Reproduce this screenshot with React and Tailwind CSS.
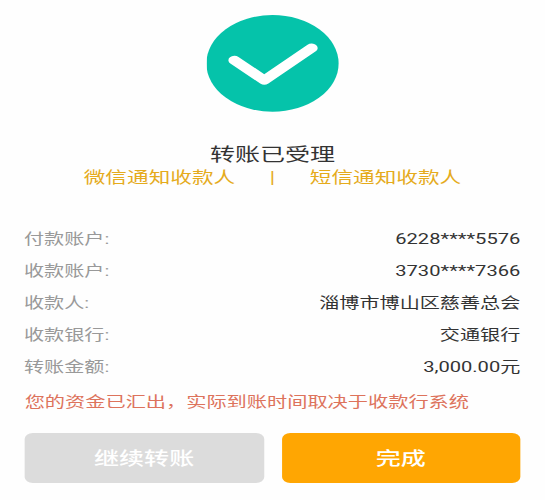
const details = [
  { label: "付款账户:", value: "6228****5576" },
  { label: "收款账户:", value: "3730****7366" },
  { label: "收款人:", value: "淄博市博山区慈善总会" },
  { label: "收款银行:", value: "交通银行" },
  { label: "转账金额:", value: "3,000.00元" },
];

const SuccessIcon = () => (
  <svg className="block w-[97px] h-[97px]" viewBox="0 0 97 97" fill="none">
    <circle cx="48" cy="48.4" r="48.3" fill="#05c3aa" />
    <path
      d="M20.2 45.2 L42 65.2 L76.6 33"
      stroke="#fff"
      strokeWidth="8.8"
      strokeLinecap="round"
      strokeLinejoin="round"
    />
  </svg>
);

const App = () => {
  return (
    <div className="w-[545px] h-[500px] overflow-hidden bg-[#fefefe]">
      {/* wide screen: the 398px layout is stretched to the full width */}
      <div className="w-[398px] h-[500px] origin-top-left scale-x-[1.3693] flex flex-col px-[18px] pt-[14.5px] font-[Roboto,'Noto_Sans_CJK_SC',sans-serif]">
        <div className="flex justify-center">
          <SuccessIcon />
        </div>

        <h1 className="mt-[31.5px] h-[24px] leading-[24px] text-center text-[18.3px] text-[#333]">
          转账已受理
        </h1>
        <div className="flex justify-center h-[22px] leading-[22px] text-[15.8px] text-[#e5ab1c]">
          <span>微信通知收款人</span>
          <span className="w-[54.5px] text-center">|</span>
          <span>短信通知收款人</span>
        </div>

        <div className="mt-[34px] text-[14.7px]">
          {details.map((item) => (
            <div key={item.label} className="flex items-center justify-between h-[32px]">
              <span className="-ml-[0.5px] text-[#999]">{item.label}</span>
              <span className="text-[#333]">{item.value}</span>
            </div>
          ))}
        </div>

        <p className="mt-[6.5px] h-[24px] leading-[24px] whitespace-nowrap text-[14.75px] text-[#dd735c]">
          您的资金已汇出，实际到账时间取决于收款行系统
        </p>

        <div className="mt-[19px] flex gap-[13px] text-[18.3px] font-medium text-white">
          <button className="flex-1 h-[50px] pt-[3px] rounded-md bg-[#dcdcdc]">继续转账</button>
          <button className="flex-1 h-[50px] pt-[3px] rounded-md bg-[#ffa602]">完成</button>
        </div>
      </div>
    </div>
  );
};

export default App;
